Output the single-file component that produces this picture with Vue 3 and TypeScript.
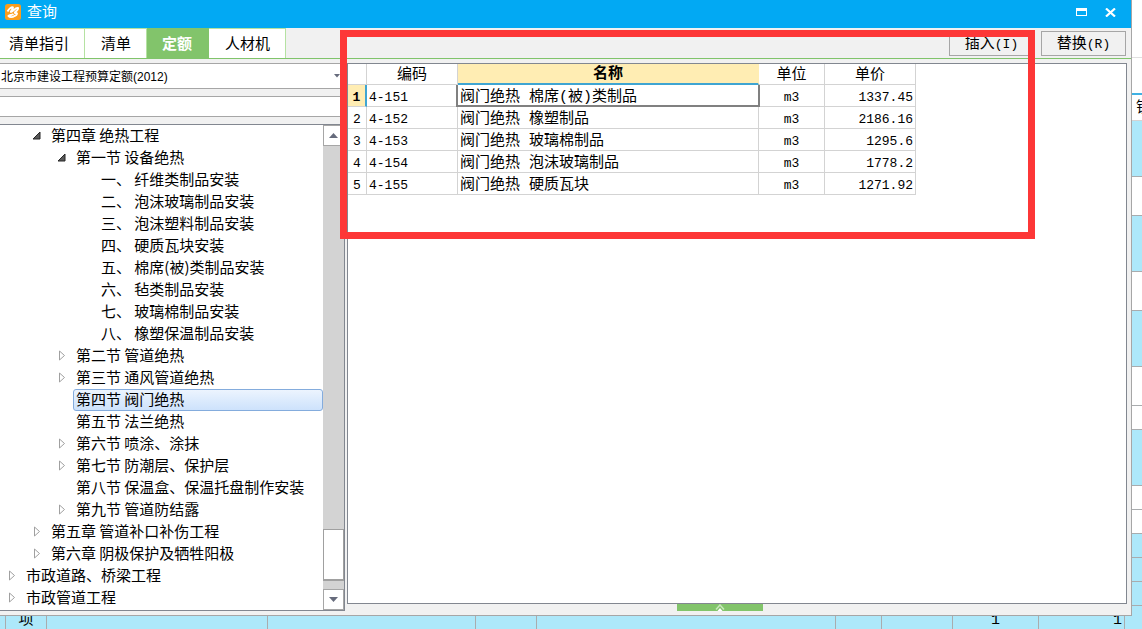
<script setup lang="ts">
import { ref } from 'vue'

interface TreeRow {
  level: number
  state: 'open' | 'closed' | 'leaf'
  text: string
}

interface QuotaRow {
  code: string
  name: string
  unit: string
  price: string
}

const tabs = ['清单指引', '清单', '定额', '人材机']
const activeTab = ref('定额')
const library = ref('北京市建设工程预算定额(2012)')
const keyword = ref('')
const selected = ref('第四节 阀门绝热')

const tree: TreeRow[] = [
  { level: 1, state: 'open', text: '第四章 绝热工程' },
  { level: 2, state: 'open', text: '第一节 设备绝热' },
  { level: 3, state: 'leaf', text: '一、 纤维类制品安装' },
  { level: 3, state: 'leaf', text: '二、 泡沫玻璃制品安装' },
  { level: 3, state: 'leaf', text: '三、 泡沫塑料制品安装' },
  { level: 3, state: 'leaf', text: '四、 硬质瓦块安装' },
  { level: 3, state: 'leaf', text: '五、 棉席(被)类制品安装' },
  { level: 3, state: 'leaf', text: '六、 毡类制品安装' },
  { level: 3, state: 'leaf', text: '七、 玻璃棉制品安装' },
  { level: 3, state: 'leaf', text: '八、 橡塑保温制品安装' },
  { level: 2, state: 'closed', text: '第二节 管道绝热' },
  { level: 2, state: 'closed', text: '第三节 通风管道绝热' },
  { level: 2, state: 'leaf', text: '第四节 阀门绝热' },
  { level: 2, state: 'leaf', text: '第五节 法兰绝热' },
  { level: 2, state: 'closed', text: '第六节 喷涂、涂抹' },
  { level: 2, state: 'closed', text: '第七节 防潮层、保护层' },
  { level: 2, state: 'leaf', text: '第八节 保温盒、保温托盘制作安装' },
  { level: 2, state: 'closed', text: '第九节 管道防结露' },
  { level: 1, state: 'closed', text: '第五章 管道补口补伤工程' },
  { level: 1, state: 'closed', text: '第六章 阴极保护及牺牲阳极' },
  { level: 0, state: 'closed', text: '市政道路、桥梁工程' },
  { level: 0, state: 'closed', text: '市政管道工程' },
]

const rows: QuotaRow[] = [
  { code: '4-151', name: '阀门绝热 棉席(被)类制品', unit: 'm3', price: '1337.45' },
  { code: '4-152', name: '阀门绝热 橡塑制品', unit: 'm3', price: '2186.16' },
  { code: '4-153', name: '阀门绝热 玻璃棉制品', unit: 'm3', price: '1295.6' },
  { code: '4-154', name: '阀门绝热 泡沫玻璃制品', unit: 'm3', price: '1778.2' },
  { code: '4-155', name: '阀门绝热 硬质瓦块', unit: 'm3', price: '1271.92' },
]
const activeRow = ref(0)

/* Cells of the estimate sheet that show beside and below the dialog. */
const sideCells = [
  { h: 58, kind: 'top' },
  { h: 35, kind: 'tool' },
  { h: 28, kind: 'head', text: '锁' },
  { h: 56, kind: 'blue' },
  { h: 39, kind: 'white' },
  { h: 56, kind: 'blue' },
  { h: 39, kind: 'white' },
  { h: 56, kind: 'blue' },
  { h: 39, kind: 'white' },
  { h: 24, kind: 'white' },
  { h: 56, kind: 'blue' },
  { h: 24, kind: 'white' },
  { h: 24, kind: 'white' },
  { h: 24, kind: 'blue' },
  { h: 24, kind: 'blue' },
  { h: 24, kind: 'blue' },
]
const footCells = [
  { w: 6, text: '' },
  { w: 41, text: '项' },
  { w: 221, text: '' },
  { w: 208, text: '' },
  { w: 61, text: '' },
  { w: 299, text: '' },
  { w: 46, text: '' },
  { w: 71, text: '' },
  { w: 86, text: '1' },
  { w: 86, text: '1', end: true },
]
</script>

<template>
  <div class="screen">
    <main class="dialog">
      <header class="title-bar">
        <svg class="logo" viewBox="0 0 16 16" aria-hidden="true">
          <rect width="16" height="16" rx="2.5" fill="#fb9d1c" />
          <path d="M2.500 7.500C4 4.500 7 2.500 8 3.500C8.500 5 5 7.500 6 8C8 8 10.500 3 13 4C14 6 9 8.500 10 9C13 8.500 12.500 11 9.500 12C7.500 13.500 4.500 13.500 3.500 12C4.500 11 7 11 8.500 10" fill="none" stroke="#fff" stroke-width="1.900" />
        </svg>
        <h1>查询</h1>
        <button class="win" type="button" aria-label="最大化">
          <svg width="11" height="8" viewBox="0 0 11 8"><path d="M0 0H11V8H0ZM1 3V7H10V3Z" fill="#fff" fill-rule="evenodd" /></svg>
        </button>
        <button class="win" type="button" aria-label="关闭">
          <svg width="11" height="9" viewBox="0 0 11 9"><path d="M1 .5 10 8.500M10 .5 1 8.500" stroke="#fff" stroke-width="2.200" /></svg>
        </button>
      </header>

      <nav class="tool-bar">
        <div class="tabs" role="tablist">
          <button
            v-for="tab in tabs"
            :key="tab"
            type="button"
            role="tab"
            class="tab"
            :class="{ active: tab === activeTab }"
            :aria-selected="tab === activeTab"
            @click="activeTab = tab"
          >{{ tab }}</button>
        </div>
        <button class="action" type="button">插入<span class="latin">(I)</span></button>
        <button class="action" type="button">替换<span class="latin">(R)</span></button>
      </nav>

      <div class="body">
        <aside class="left">
          <div class="combo">
            <select v-model="library" aria-label="定额库">
              <option>北京市建设工程预算定额(2012)</option>
            </select>
            <svg width="6" height="4" viewBox="0 0 6 4" aria-hidden="true"><path d="M0 0H6L3 3.500Z" fill="#666b7c" /></svg>
          </div>
          <input v-model="keyword" class="search" type="text" aria-label="查找">
          <div class="tree-box">
            <ul class="tree" role="tree">
              <li v-for="row in tree" :key="row.text" role="treeitem" :aria-selected="row.text === selected">
                <button type="button" class="node" :class="['level-' + row.level, { selected: row.text === selected }]" @click="selected = row.text">
                  <span class="mark">
                    <svg v-if="row.state === 'open'" width="9" height="9" viewBox="0 0 9 9"><path d="M8 1V8H1Z" fill="#595959" stroke="#262626" /></svg>
                    <svg v-else-if="row.state === 'closed'" width="8" height="11" viewBox="0 0 8 11"><path d="M1.500 1V10L6.500 5.500Z" fill="#fff" stroke="#a0a0a0" /></svg>
                  </span>
                  <span class="label">{{ row.text }}</span>
                </button>
              </li>
            </ul>
            <div class="scroll">
              <button type="button" aria-label="向上滚动"><svg width="9" height="5" viewBox="0 0 9 5"><path d="M0 5H9L4.500 0Z" fill="#666b7c" /></svg></button>
              <div class="track"><div class="thumb"></div></div>
              <button type="button" aria-label="向下滚动"><svg width="9" height="5" viewBox="0 0 9 5"><path d="M0 0H9L4.500 5Z" fill="#666b7c" /></svg></button>
            </div>
          </div>
        </aside>

        <section class="right">
          <div class="grid-box">
            <table>
              <colgroup>
                <col class="c-no"><col class="c-code"><col class="c-name"><col class="c-unit"><col class="c-price">
              </colgroup>
              <thead>
                <tr><th></th><th>编码</th><th class="current">名称</th><th>单位</th><th>单价</th></tr>
              </thead>
              <tbody>
                <tr v-for="(row, i) in rows" :key="row.code" :class="{ active: i === activeRow }" @click="activeRow = i">
                  <th scope="row">{{ i + 1 }}</th>
                  <td class="latin">{{ row.code }}</td>
                  <td class="name">{{ row.name }}</td>
                  <td class="latin center">{{ row.unit }}</td>
                  <td class="latin price">{{ row.price }}</td>
                </tr>
              </tbody>
            </table>
          </div>
          <button class="expand" type="button" aria-label="展开">
            <svg width="10" height="7" viewBox="0 0 10 7"><path d="M1 5.500 5 1 9 5.500" fill="none" stroke="#c9e8bd" stroke-width="1.500" /><path d="M2.500 7 5 4 7.500 7Z" fill="#fff" /></svg>
          </button>
        </section>
      </div>
    </main>

    <div class="side">
      <div v-for="(cell, i) in sideCells" :key="i" :class="cell.kind" :style="{ height: cell.h + 'px' }">{{ cell.text }}</div>
      <div class="blue rest"></div>
    </div>

    <div class="foot">
      <div v-for="(cell, i) in footCells" :key="i" :class="{ end: cell.end }" :style="{ flexBasis: cell.w + 'px' }">{{ cell.text }}</div>
      <div class="rest"></div>
    </div>

    <div class="highlight"></div>
  </div>
</template>

<style>
body {
  margin: 0;
}
</style>

<style scoped>
* {
  box-sizing: border-box;
}

.screen {
  position: relative;
  display: grid;
  grid-template-columns: minmax(0, 1fr) 10px;
  grid-template-rows: minmax(0, 1fr) 13px;
  height: 100vh;
  min-height: 629px;
  overflow: hidden;
  color: #000;
  font: 15px/20px "Liberation Mono", "Noto Sans CJK SC", monospace;
}

button,
input,
select {
  margin: 0;
  padding: 0;
  border: 0;
  border-radius: 0;
  background: none;
  color: inherit;
  font: inherit;
}

svg {
  display: block;
  flex: none;
}

.latin {
  font-size: 13px;
}

.dialog {
  display: flex;
  flex-direction: column;
  border: solid #a6a6a6;
  border-width: 0 1px 1px 0;
  background: #f1f1f1;
}

.title-bar {
  display: flex;
  align-items: center;
  flex: none;
  height: 28px;
  padding: 0 10px 4px 5px;
  background: #02a9f3;
  color: #fff;
}

.logo {
  width: 16px;
  height: 16px;
}

.title-bar h1 {
  flex: 1;
  margin: 0 0 0 6px;
  padding-top: 4px;
  font-size: 15px;
  font-weight: 400;
}

.win {
  display: flex;
  align-items: center;
  justify-content: center;
  width: 21px;
  height: 20px;
  margin-left: 8px;
}

.tool-bar {
  display: flex;
  flex: none;
  gap: 7px;
  height: 31px;
  padding-right: 5px;
  border-bottom: 1px solid #80c46b;
}

.tabs {
  display: flex;
  flex: 1;
}

.tab {
  padding: 5px 15px 0 16px;
  border: solid #b5e2a2;
  border-width: 1px 1px 0 0;
  background: #fff;
}

.tab:first-child {
  padding-left: 9px;
}

.tab.active {
  padding-left: 15px;
  padding-right: 16px;
  border-color: #82c46b;
  background: #82c46b;
  color: #fff;
  font-weight: 700;
}

.action {
  width: 85px;
  height: 25px;
  margin-top: 3px;
  padding-top: 3px;
  border: 1px solid #a6a6a6;
}

.body {
  display: flex;
  flex: 1;
  gap: 2px;
  min-height: 0;
  padding: 4px 4px 4px 0;
}

.left {
  display: flex;
  flex-direction: column;
  flex: none;
  width: 345px;
}

.combo {
  display: flex;
  align-items: center;
  flex: none;
  height: 26px;
  padding: 0 5px 0 1px;
  border: solid #a6a6a6;
  border-width: 1px 0;
  background: #fff;
}

.combo select {
  flex: 1;
  height: 24px;
  padding-top: 1px;
  appearance: none;
  font: 12px/20px "Liberation Sans", "Noto Sans CJK SC", sans-serif;
}

.search {
  flex: none;
  width: 100%;
  height: 21px;
  margin: 7px 0;
  border: solid #a6a6a6;
  border-width: 1px 0;
  background: #fff;
}

.tree-box {
  display: flex;
  flex: 1;
  min-height: 0;
  border: solid #828790;
  border-width: 1px 1px 1px 0;
  background: #fff;
}

.tree {
  flex: 1;
  margin: 0;
  padding: 0;
  overflow: hidden;
  list-style: none;
  font-family: "Noto Sans CJK SC", sans-serif;
}

.node {
  display: flex;
  width: 100%;
  height: 22px;
  line-height: 18px;
  text-align: left;
  white-space: nowrap;
}

.level-1 {
  padding-left: 25px;
}

.level-2 {
  padding-left: 50px;
}

.level-3 {
  padding-left: 75px;
}

.mark {
  display: flex;
  align-items: center;
  justify-content: center;
  flex: none;
  width: 23px;
  height: 21px;
}

.label {
  flex: 1;
  padding: 0 2px;
  border: 1px solid transparent;
  border-radius: 3px;
}

.selected .label {
  border-color: #84acdd;
  background: linear-gradient(#ecf4fe, #cde2fc);
}

.scroll {
  display: flex;
  flex-direction: column;
  flex: none;
  width: 21px;
  background: #d3d3d3;
}

.scroll button {
  display: flex;
  align-items: center;
  justify-content: center;
  flex: none;
  height: 21px;
  border: 1px solid #a6a6a6;
  background: #fff;
}

.track {
  display: flex;
  flex-direction: column;
  justify-content: flex-end;
  flex: 1;
  padding-bottom: 8px;
}

.thumb {
  height: 52px;
  border: 1px solid #a0a0a0;
  border-bottom-width: 2px;
  background: #fff;
}

.right {
  display: flex;
  flex-direction: column;
  align-items: center;
  flex: 1;
  min-width: 0;
}

.grid-box {
  flex: 1;
  width: 100%;
  border: 1px solid #828790;
  background: #fff;
}

table {
  width: 568px;
  border-spacing: 0;
  table-layout: fixed;
}

.c-no {
  width: 19px;
}

.c-code,
.c-price {
  width: 91px;
}

.c-name {
  width: 301px;
}

.c-unit {
  width: 66px;
}

th,
td {
  height: 22px;
  padding: 4px 2px 0;
  border: solid #d3d3d3;
  border-width: 0 1px 1px 0;
  font-weight: 400;
  line-height: 16px;
  text-align: left;
  white-space: nowrap;
}

thead th {
  height: 21px;
  padding-top: 3px;
  text-align: center;
}

thead .current {
  border-right-color: #ffedb3;
  border-bottom: 2px solid #3fa5d2;
  background: #ffedb3;
  font-weight: 700;
}

tbody th {
  padding: 4px 0 0;
  font-size: 13px;
  text-align: center;
}

.active th {
  border-right: 2px solid #3fa5d2;
  background: #ffedb3;
  font-weight: 700;
}

.active .name {
  position: relative;
}

.active .name::after {
  position: absolute;
  inset: 0 -2px -1px -2px;
  border: solid #808080;
  border-width: 0 2px 2px;
  content: "";
}

.center {
  text-align: center;
}

.price {
  text-align: right;
}

.expand {
  display: flex;
  align-items: center;
  justify-content: center;
  flex: none;
  width: 86px;
  height: 7px;
  margin-right: 34px;
  background: #82c46b;
}

.side {
  display: flex;
  flex-direction: column;
  grid-row: 1 / 3;
  grid-column: 2;
  overflow: hidden;
}

.side div {
  flex: none;
  border-bottom: 1px solid #a9acae;
  background: #fff;
}

.side .top {
  border-color: #e0e0e0;
}

.side .tool {
  border: 0;
}

.side .head {
  padding: 4px 0 0 4px;
  border-top: 2px solid #3fb1e3;
  border-bottom-color: #d3d3d3;
}

.side .blue {
  background: #ade8fa;
}

.side .rest {
  flex: 1;
  border: 0;
}

.foot {
  display: flex;
  background: #ade8fa;
}

.foot div {
  display: flex;
  align-items: flex-end;
  justify-content: center;
  flex: 0 1 auto;
  height: 13px;
  overflow: hidden;
  border-right: 1px solid #a9acae;
  line-height: 16px;
}

.foot .end {
  justify-content: flex-end;
  padding-right: 2px;
}

.foot .rest {
  flex: 1;
  border: 0;
}

.highlight {
  position: absolute;
  top: 30px;
  right: 107px;
  left: 340px;
  height: 209px;
  border: 7px solid #fd3737;
  pointer-events: none;
}
</style>
